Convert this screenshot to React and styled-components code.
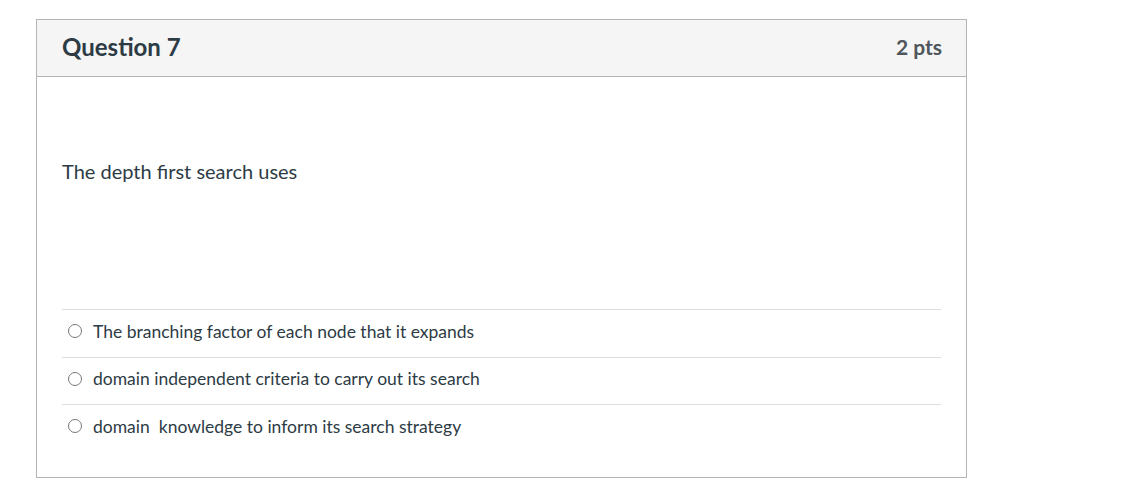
import React from 'react'
import styled, { createGlobalStyle } from 'styled-components'

const GlobalStyle = createGlobalStyle`
  body {
    margin: 0;
    background: #ffffff;
    font-family: Lato, "Noto Sans", sans-serif;
    color: #2d3b45;
  }
`

const Page = styled.div`
  padding: 19px 0 0 36px;
`
const Card = styled.div`
  width: 931px;
  height: 459px;
  box-sizing: border-box;
  border: 1px solid #b4b4b4;
  display: flex;
  flex-direction: column;
`
const Header = styled.div`
  height: 57px;
  flex: none;
  box-sizing: border-box;
  background: #f5f5f5;
  border-bottom: 1px solid #b4b4b4;
  display: flex;
  align-items: center;
  justify-content: space-between;
  padding: 0 24px 3px 25px;
`
const Title = styled.h2`
  margin: 0;
  font-size: 24px;
  font-weight: 700;
  color: #2d3b45;
`
const Points = styled.span`
  font-size: 21px;
  font-weight: 700;
  color: #4f575c;
`
const Body = styled.div`
  padding: 81px 25px 0 25px;
`
const Prompt = styled.p`
  margin: 0 0 125px;
  font-size: 20px;
  line-height: 26px;
  color: #2d3b45;
`
const Answers = styled.div`
  display: flex;
  flex-direction: column;
`
const Answer = styled.label`
  display: flex;
  align-items: center;
  gap: 11px;
  height: 47.5px;
  box-sizing: border-box;
  padding: 0 0 4px 6px;
  border-top: 1px solid #dddddd;
  font-size: 17.5px;
  color: #2d3b45;
  white-space: pre;
`
const Radio = styled.span`
  width: 14px;
  height: 14px;
  border: 1.4px solid #777777;
  border-radius: 50%;
  flex: none;
  box-sizing: border-box;
  background: #fff;
`

const answers = [
  'The branching factor of each node that it expands',
  'domain independent criteria to carry out its search',
  'domain  knowledge to inform its search strategy',
]

const App = () => {
  return (
    <Page>
      <GlobalStyle />
      <Card>
        <Header>
          <Title>Question 7</Title>
          <Points>2 pts</Points>
        </Header>
        <Body>
          <Prompt>The depth first search uses</Prompt>
          <Answers>
            {answers.map((a, i) => (
              <Answer key={i}>
                <Radio />
                {a}
              </Answer>
            ))}
          </Answers>
        </Body>
      </Card>
    </Page>
  )
}

export default App
